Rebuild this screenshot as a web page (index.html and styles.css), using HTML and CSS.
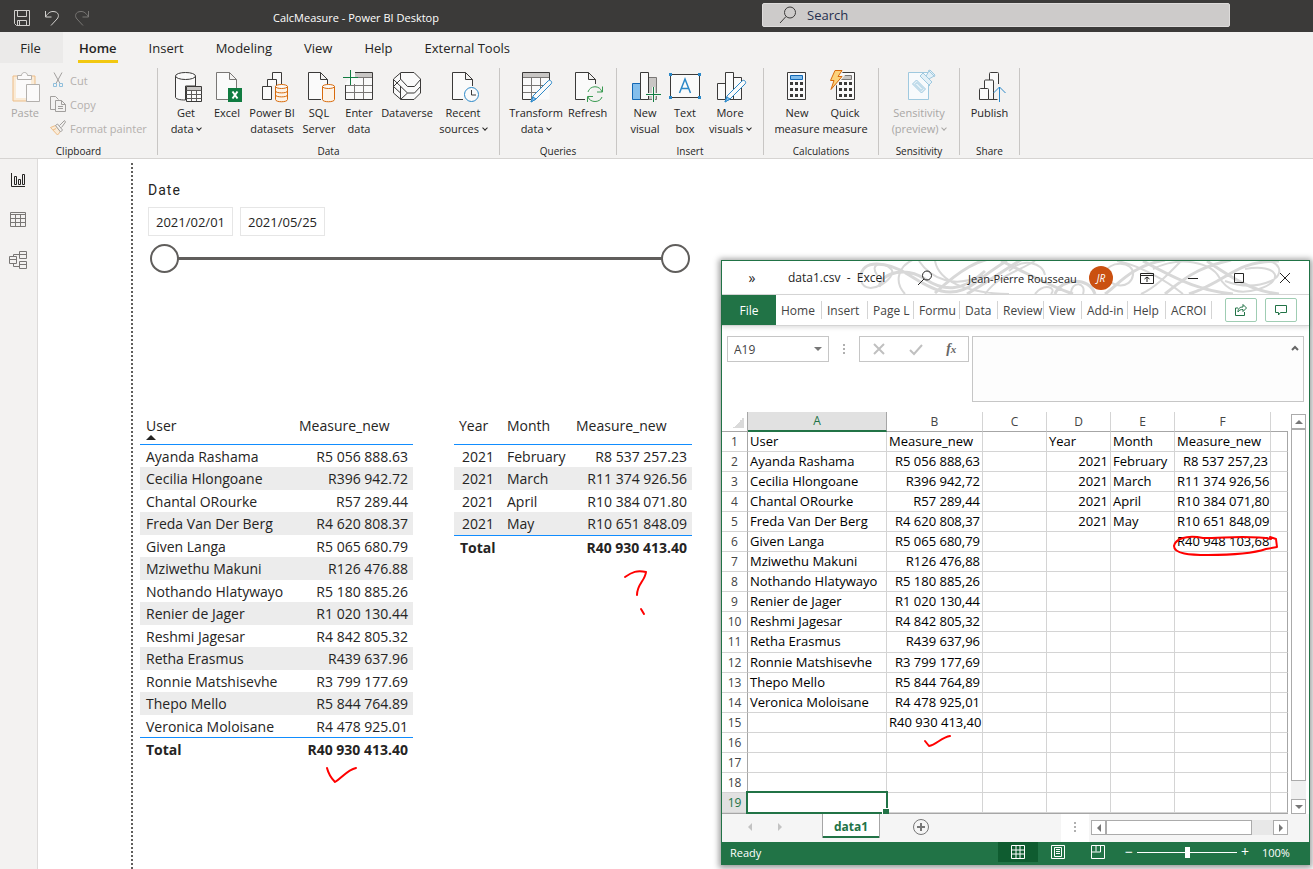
FILE: index.html
```
<!DOCTYPE html>
<html lang="en">
<head>
    <meta charset="UTF-8">
    <meta name="viewport" content="width=device-width, initial-scale=1.0">
    <title>CalcMeasure - Power BI Desktop</title>
    <link rel="stylesheet" href="styles.css">
</head>
<body>
    <!-- title bar -->
    <header class="titlebar">
        <div class="quick-access">
            <button aria-label="Save"><svg width="16" height="16" viewBox="0 0 16 16"><path d="M.5.5h15v15H2.500L.5 13.500zM3.500.5v6h9v-6M3.500 15.500v-5h9v5M5.500 11v4.500" /></svg></button>
            <button aria-label="Undo"><svg width="16" height="16" viewBox="0 0 16 16"><path d="M1.500 1v6h6M1.500 7C4 3 6 1.500 9 1.500c6 0 6.500 5 4 7.500L7 15.500" /></svg></button>
            <button aria-label="Redo" disabled><svg width="16" height="16" viewBox="0 0 16 16"><path d="M14.500 1v6h-6M14.500 7C12 3 10 1.500 7 1.500c-6 0-6.500 5-4 7.500l6 6.500" /></svg></button>
        </div>
        <div class="app-title">CalcMeasure - Power BI Desktop</div>
        <label class="search">
            <svg width="18" height="18" viewBox="0 0 18 18"><circle cx="11" cy="6.500" r="5.500" /><path d="M7 10.500L1 17" /></svg>
            <input type="text" placeholder="Search" aria-label="Search">
        </label>
    </header>

    <!-- ribbon tabs -->
    <nav class="tabs">
        <button class="tab tab-file">File</button>
        <button class="tab active">Home</button>
        <button class="tab">Insert</button>
        <button class="tab">Modeling</button>
        <button class="tab">View</button>
        <button class="tab">Help</button>
        <button class="tab">External Tools</button>
    </nav>

    <!-- ribbon -->
    <div class="ribbon">
        <section class="group group-clipboard">
            <div class="cmds">
                <button class="cmd" disabled>
                    <svg class="icon" viewBox="0 0 32 32"><path d="M4 6h22v25H4z" fill="#faebd7" stroke="#edbd87" /><path d="M7 9h15v19H7z" fill="#fbfafa" stroke="none" /><path d="M8.500 9.500V5.500h4c0-4 6-4 6 0h4v4z" fill="#fbfafa" stroke="#b3b0ad" /><path d="M17.500 14.500h13v17h-13z" fill="#fbfafa" stroke="#b3b0ad" /></svg>
                    Paste
                </button>
                <div class="small-cmds">
                    <button disabled><svg width="16" height="16" viewBox="0 0 16 16"><path d="M4 .5l6 11M12 .5l-6 11" stroke="#a19f9d" /><path d="M3.500 11.500h3v3h-3zM9.500 11.500h3v3h-3z" stroke="#8fbfdc" /></svg>Cut</button>
                    <button disabled><svg width="16" height="16" viewBox="0 0 16 16"><path d="M5.500 13.500h-5V.5h5l3 3M5.500 4.500h6l4 4v7h-10zM11.500 4.500v4h4M8 10.500h5M8 12.500h5" stroke="#a19f9d" /></svg>Copy</button>
                    <button disabled><svg width="16" height="16" viewBox="0 0 16 16"><path d="M.5 7.500l5-2 5 6-3 3.500zM3 10l3-1.500" fill="#faebd7" stroke="#edbd87" /><path d="M5.500 5.500l2-1.500 5 6-2 2zM9.500 5.500l5-5 1 1.500-4 5.500" fill="#f3f2f1" stroke="#a19f9d" /></svg>Format painter</button>
                </div>
            </div>
            <h2>Clipboard</h2>
        </section>

        <section class="group group-data">
            <div class="cmds">
                <button class="cmd">
                    <svg class="icon" viewBox="0 0 32 32"><path d="M5.500 6v21c0 2 4 3 10 3V16h10V6" fill="#fafafa" /><ellipse cx="15.500" cy="6" rx="10" ry="3.500" fill="#fafafa" /><path d="M16.500 16.500h15v15h-15z" fill="#fafafa" /><path d="M17 17h14v3H17z" fill="#c8c6c4" stroke="none" /><path d="M16.500 20.500h15M16.500 24.500h15M16.500 28.500h15M21.500 20v11M26.500 20v11" stroke="#605e5c" /></svg>
                    Get<br>data <i class="caret"></i>
                </button>
                <button class="cmd">
                    <svg class="icon" viewBox="0 0 32 32"><path d="M17 29.500H5.500v-27h13l7 7V18M18.500 2.500v7h7" fill="#fafafa" stroke="#797775" /><path d="M17 18h14v14H17z" fill="#107c41" stroke="none" /><path d="M21.500 21.500l5 7M26.500 21.500l-5 7" stroke="#fff" stroke-width="2" /></svg>
                    Excel
                </button>
                <button class="cmd">
                    <svg class="icon" viewBox="0 0 32 32"><path d="M6.500 16.500h9v13h-9zM11.500 16V9.500h9V15M16.500 9V2.500h9V14" fill="#fafafa" /><path d="M19.500 16.500v13c0 3 12 3 12 0v-13z" fill="#fdf3e7" stroke="#d86a0b" /><ellipse cx="25.500" cy="16.500" rx="6" ry="2" fill="#fafafa" stroke="#d86a0b" /><path d="M19.500 21c0 2.500 12 2.500 12 0M19.500 25c0 2.500 12 2.500 12 0" stroke="#d86a0b" /></svg>
                    Power BI<br>datasets
                </button>
                <button class="cmd">
                    <svg class="icon" viewBox="0 0 32 32"><path d="M18 29.500H5.500v-27h12l7 7V14M17.500 2.500v7h7" fill="#fafafa" /><path d="M19.500 16.500v13c0 3 12 3 12 0v-13z" fill="#fdf3e7" stroke="#d86a0b" /><ellipse cx="25.500" cy="16.500" rx="6" ry="2" fill="#fafafa" stroke="#d86a0b" /></svg>
                    SQL<br>Server
                </button>
                <button class="cmd">
                    <svg class="icon" viewBox="0 0 32 32"><path d="M2.500 13v16.500h27v-27H11" fill="#fafafa" stroke="none" /><path d="M12 3h17v4H12z" fill="#c8c6c4" stroke="none" /><path d="M13 7.500h16.500M3 15.500h26.500M3 22.500h26.500M11.500 14v15M20.500 7v22" stroke="#797775" /><path d="M2.500 15v14.500h27v-27H12" /><path d="M7.500 0v15M0 7.500h15" stroke="#107c41" /></svg>
                    Enter<br>data
                </button>
                <button class="cmd">
                    <svg class="icon" viewBox="0 0 32 32"><path d="M10 2.500h13l6.500 6.500v14L23 29.500H10L2.500 23V9z" fill="#fafafa" /><path d="M9.500 3v6l7 7.500h7l6-7M2.500 9.500l14 13.500h7l6-6.500M2.500 16.500l7 6.500v6M9.500 29.500l7-6.500M9.500 16v7M2.500 16.500l7-7" /></svg>
                    Dataverse
                </button>
                <button class="cmd">
                    <svg class="icon" viewBox="0 0 32 32"><path d="M16 29.500H5.500v-27h13l7 7V16M18.500 2.500v7h7" fill="#fafafa" /><circle cx="24.500" cy="24.500" r="7" fill="#fafafa" stroke="#2b88c8" /><path d="M24.500 20v5H29" /></svg>
                    Recent<br>sources <i class="caret"></i>
                </button>
            </div>
            <h2>Data</h2>
        </section>

        <section class="group group-queries">
            <div class="cmds">
                <button class="cmd">
                    <svg class="icon" viewBox="0 0 32 32"><path d="M2.500 2.500h27v27h-27z" fill="#fafafa" stroke="none" /><path d="M3 3h26v4H3z" fill="#c8c6c4" stroke="none" /><path d="M3 7.500h26M3 15.500h24M3 22.500h17M11.500 7v22M20.500 7v15" stroke="#797775" /><path d="M11 29.500H2.500v-27h27V10" /><path d="M11 32l2-6L28 11c2-2 5 1 3 3L16 29z" fill="#fafafa" stroke="#2b88c8" /><path d="M11 32l2-5 3 2z" fill="#83beec" stroke="#2b88c8" /></svg>
                    Transform<br>data <i class="caret"></i>
                </button>
                <button class="cmd">
                    <svg class="icon" viewBox="0 0 32 32"><path d="M14 29.500H4.500v-27h13l7 7V14M17.500 2.500v7h7" fill="#fafafa" /><path d="M17 22c2-7 12-7 14 0M31.500 16.500V22H26M31 27c-2 6-12 6-14 0M16.500 32v-5.500H22" stroke="#3a9b52" /></svg>
                    Refresh
                </button>
            </div>
            <h2>Queries</h2>
        </section>

        <section class="group group-insert">
            <div class="cmds">
                <button class="cmd">
                    <svg class="icon" viewBox="0 0 32 32"><path d="M3.500 13.500h8v16h-8z" fill="#83beec" stroke="#1267b4" /><path d="M19.500 7.500h8v22h-8z" fill="#c8c6c4" stroke="#797775" /><path d="M11.500 2.500h8v27h-8z" fill="#fafafa" /><path d="M24.500 17v15M17 24.500h15" stroke="#f3f2f1" stroke-width="3" /><path d="M24.500 17v15M17 24.500h15" stroke="#107c41" /></svg>
                    New<br>visual
                </button>
                <button class="cmd">
                    <svg class="icon" viewBox="0 0 32 32"><path d="M1.500 4.500h29v23h-29z" fill="#fafafa" /><path d="M10.500 23L16 9l5.500 14M12.500 18.500h7" stroke="#2b88c8" stroke-width="1.500" /><path d="M0 3h3v3H0zM29 3h3v3h-3zM0 26h3v3H0zM29 26h3v3h-3z" fill="#2b88c8" stroke="none" /></svg>
                    Text<br>box
                </button>
                <button class="cmd">
                    <svg class="icon" viewBox="0 0 32 32"><path d="M3.500 13.500h8v16h-8zM19.500 7.500h8v22h-8zM11.500 2.500h8v27h-8z" fill="#fafafa" /><path d="M11 32l2-6L28 11c2-2 5 1 3 3L16 29z" fill="#fafafa" stroke="#2b88c8" /><path d="M11 32l2-5 3 2z" fill="#83beec" stroke="#2b88c8" /></svg>
                    More<br>visuals <i class="caret"></i>
                </button>
            </div>
            <h2>Insert</h2>
        </section>

        <section class="group group-calc">
            <div class="cmds">
                <button class="cmd">
                    <svg class="icon" viewBox="0 0 32 32"><path d="M6.500 2.500h18v27h-18z" fill="#fafafa" /><path d="M9.500 5.500h12v4h-12z" fill="#83beec" stroke="#1267b4" /><path d="M9 13.500h13M9 19.500h13M9 25.500h13" stroke-width="3" stroke-dasharray="3 2" /></svg>
                    New<br>measure
                </button>
                <button class="cmd">
                    <svg class="icon" viewBox="0 0 32 32"><path d="M7.500 2.500h18v27h-18z" fill="#fafafa" /><path d="M11.500 5.500h11v4h-11z" fill="#c8c6c4" stroke="#797775" /><path d="M10 13.500h13M10 19.500h13M10 25.500h13" stroke-width="3" stroke-dasharray="3 2" /><path d="M6 .5h7l-4 6h4L2 19.500l3-9H1.500z" fill="#fcd27c" stroke="#f3f2f1" stroke-width="3" /><path d="M6 .5h7l-4 6h4L2 19.500l3-9H1.500z" fill="#fcd27c" stroke="#d86a0b" /></svg>
                    Quick<br>measure
                </button>
            </div>
            <h2>Calculations</h2>
        </section>

        <section class="group group-sens">
            <div class="cmds">
                <button class="cmd" disabled>
                    <svg class="icon" viewBox="0 0 32 32"><path d="M5.500 2.500h20v27h-20z" fill="#f7fafc" stroke="#9fc9df" /><g fill="#e3f0f7" stroke="#9fc9df"><path d="M9.500 14l4-4 9 9-4 4zM12 14.500l2-2 6 6-2 2z" /><path d="M17 6l3-3 9 9-3 3zM19 8l8 8M23 6l3-5 5 5-5 3zM25 1l2-1 5 5-1 2" /></g></svg>
                    Sensitivity<br>(preview) <i class="caret"></i>
                </button>
            </div>
            <h2>Sensitivity</h2>
        </section>

        <section class="group group-share">
            <div class="cmds">
                <button class="cmd">
                    <svg class="icon" viewBox="0 0 32 32"><path d="M15.500 10V3.500q0-1 1-1h7q1 0 1 1V14M10.500 18v-7q0-1 1-1h7q1 0 1 1v18.500M5.500 29.500v-10q0-1 1-1h7q1 0 1 1v10zM14.500 29.500h9" fill="#fafafa" /><path d="M25.500 32V17M19.500 23l6-6 6 6" stroke="#2b88c8" /></svg>
                    Publish
                </button>
            </div>
            <h2>Share</h2>
        </section>
    </div>

    <main class="workspace">
        <!-- view switcher -->
        <aside class="views">
            <button class="active" aria-label="Report"><svg width="18" height="18" viewBox="0 0 18 18"><path d="M2.500 2v13.500H16M5.500 5.500h2v8h-2zM9.500 8.500h2v5h-2zM13.500 3.500h2v10h-2z" /></svg></button>
            <button aria-label="Data"><svg width="18" height="18" viewBox="0 0 18 18"><path d="M1.500 1.500h15v14h-15zM1.500 3.500h15M1.500 7.500h15M1.500 11.500h15M6.500 3.500v12M11.500 3.500v12" /></svg></button>
            <button aria-label="Model"><svg width="18" height="18" viewBox="0 0 18 18"><path d="M.5 5.500h7v7h-7zM.5 8.500h7M10.500.5h7v7h-7zM10.500 3.500h7M10.500 10.500h7v7h-7zM10.500 13.500h7M4.500 5.500v-2h6M4.500 12.500v3h6" /></svg></button>
        </aside>

        <div class="report">
            <div class="slicer">
                <h3>Date</h3>
                <div class="dates">
                    <input type="text" value="2021/02/01" aria-label="Start date">
                    <input type="text" value="2021/05/25" aria-label="End date">
                </div>
                <div class="range">
                    <input type="range" min="0" max="100" value="0" aria-label="Range start">
                    <input type="range" min="0" max="100" value="100" aria-label="Range end">
                </div>
            </div>

            <div class="visuals">
                <table class="visual by-user">
                    <thead>
                        <tr><th>User<i class="sort"></i></th><th>Measure_new</th></tr>
                    </thead>
                    <tbody>
                        <tr><td>Ayanda Rashama</td><td>R5 056 888.63</td></tr>
                        <tr><td>Cecilia Hlongoane</td><td>R396 942.72</td></tr>
                        <tr><td>Chantal ORourke</td><td>R57 289.44</td></tr>
                        <tr><td>Freda Van Der Berg</td><td>R4 620 808.37</td></tr>
                        <tr><td>Given Langa</td><td>R5 065 680.79</td></tr>
                        <tr><td>Mziwethu Makuni</td><td>R126 476.88</td></tr>
                        <tr><td>Nothando Hlatywayo</td><td>R5 180 885.26</td></tr>
                        <tr><td>Renier de Jager</td><td>R1 020 130.44</td></tr>
                        <tr><td>Reshmi Jagesar</td><td>R4 842 805.32</td></tr>
                        <tr><td>Retha Erasmus</td><td>R439 637.96</td></tr>
                        <tr><td>Ronnie Matshisevhe</td><td>R3 799 177.69</td></tr>
                        <tr><td>Thepo Mello</td><td>R5 844 764.89</td></tr>
                        <tr><td>Veronica Moloisane</td><td>R4 478 925.01</td></tr>
                    </tbody>
                    <tfoot>
                        <tr><td>Total</td><td>R40 930 413.40</td></tr>
                    </tfoot>
                </table>

                <table class="visual by-month">
                    <thead>
                        <tr><th>Year</th><th>Month</th><th>Measure_new</th></tr>
                    </thead>
                    <tbody>
                        <tr><td>2021</td><td>February</td><td>R8 537 257.23</td></tr>
                        <tr><td>2021</td><td>March</td><td>R11 374 926.56</td></tr>
                        <tr><td>2021</td><td>April</td><td>R10 384 071.80</td></tr>
                        <tr><td>2021</td><td>May</td><td>R10 651 848.09</td></tr>
                    </tbody>
                    <tfoot>
                        <tr><td>Total</td><td></td><td>R40 930 413.40</td></tr>
                    </tfoot>
                </table>
            </div>

            <svg class="ink ink-total" width="36" height="22" viewBox="0 0 36 22"><path d="M3 4c1 4 2 8 8 14 7-4 12-12 21-14" /></svg>
            <svg class="ink ink-question" width="30" height="50" viewBox="0 0 30 50"><path d="M4 10c7-5 12-7 21-5-1 9-9 12-9 23M20 42l3 5" /></svg>
        </div>
    </main>

    <!-- floating Excel window -->
    <div class="excel">
        <div class="xl-title">
            <svg class="swirls" width="450" height="33" viewBox="0 0 450 33">
                <g stroke-width="3">
                    <path d="M2 16C2-2 28 0 50 14s42 26 66 8c16-12 24-18 32-22M108 33c24-14 40-26 54-34M76 32C100 10 120-4 146-4M20 26C24 10 48 6 66 18s36 14 60-8" />
                    <path d="M142 0c30 14 46 24 72 33M196 33c6-16 34-18 40 0M246 33c14-10 26-28 60-34M330 33C370 20 374 0 420 0M284 0c40 22 60 30 90 33M306 33c26-22 40-28 66-34M348 0c24 16 44 30 72 33" />
                </g>
                <g stroke-width="2">
                    <path d="M2 20c6 18 38-4 30-12S10 2 18 14M46 33C34 20 40 4 56-2M60 0c12 18 36 28 64 14M76 0c4 20 30 32 74 33M126 33C140 14 160 10 176 0M150 10c14-14 34-8 36 4" />
                    <path d="M176 33c10-12 22-6 16 0M212 33c0-14 16-12 12 0M246 14c2-16 30-14 28 0s-22 14-28 0M258 0c22 4 50 20 66 33M294 8c28-14 58-6 66 8s20 18 40 12c26-8 20-26-14-20M322 0c-10 10-24 26-40 33M402 0c20-2 24 14 10 20s-30 6-46 0" />
                </g>
            </svg>
            <button class="xl-more" aria-label="More">»</button>
            <div class="xl-name">data1.csv&nbsp; -&nbsp; Excel</div>
            <button class="xl-search" aria-label="Search"><svg width="16" height="16" viewBox="0 0 16 16"><circle cx="10" cy="5.500" r="4.500" /><path d="M7 9L1 15" /></svg></button>
            <div class="xl-user">Jean-Pierre Rousseau</div>
            <div class="avatar">JR</div>
            <div class="xl-window-btns">
                <button aria-label="Ribbon display options"><svg width="14" height="14" viewBox="0 0 14 14"><path d="M.5 2.500h13v10H.5zM.5 4.500h13M7 11V6M4.500 8L7 6l2.500 2" /></svg></button>
                <button aria-label="Minimise"><svg width="14" height="14" viewBox="0 0 14 14"><path d="M2 7.500h10" /></svg></button>
                <button aria-label="Maximise"><svg width="14" height="14" viewBox="0 0 14 14"><path d="M2.500 2.500h9v9h-9z" /></svg></button>
                <button aria-label="Close"><svg width="14" height="14" viewBox="0 0 14 14"><path d="M2 2l10 10M12 2L2 12" /></svg></button>
            </div>
        </div>

        <nav class="xl-tabs">
            <button class="xl-file">File</button>
            <button>Home</button>
            <button>Insert</button>
            <button>Page L</button>
            <button>Formu</button>
            <button class="short">Data</button>
            <button>Review</button>
            <button class="short">View</button>
            <button>Add-in</button>
            <button class="short">Help</button>
            <button>ACROI</button>
            <div class="xl-actions">
                <button aria-label="Share"><svg width="14" height="14" viewBox="0 0 14 14"><path d="M4 5H1.500v7.500h9V9M4 9c0-4 2-5 5-5V1.500L12.500 5 9 8.500V6.500C6.500 6.500 5 7 4 9z" /></svg></button>
                <button aria-label="Comments"><svg width="14" height="14" viewBox="0 0 14 14"><path d="M1.500 2.500h11v7h-6L4.500 12V9.500h-3z" /></svg></button>
            </div>
        </nav>

        <div class="formula-bar">
            <label class="name-box"><input type="text" value="A19" aria-label="Name box"><i class="tri-down"></i></label>
            <i class="grip"></i>
            <div class="fx">
                <button disabled aria-label="Cancel"><svg width="14" height="14" viewBox="0 0 14 14"><path d="M2 2l10 10M12 2L2 12" /></svg></button>
                <button disabled aria-label="Enter"><svg width="14" height="14" viewBox="0 0 14 14"><path d="M1 8l4 4 8-9" /></svg></button>
                <button class="fx-btn">f<sub>x</sub></button>
            </div>
            <div class="formula">
                <textarea aria-label="Formula"></textarea>
                <svg width="8" height="6" viewBox="0 0 8 6"><path d="M1 5l3-3 3 3" /></svg>
            </div>
        </div>

        <div class="sheet">
            <table class="grid">
                <colgroup><col class="c-num"><col class="c-a"><col class="c-b"><col class="c-c"><col class="c-c"><col class="c-c"><col class="c-b"><col class="c-rest"></colgroup>
                <thead>
                    <tr><th class="corner"></th><th class="selected">A</th><th>B</th><th>C</th><th>D</th><th>E</th><th>F</th><th></th></tr>
                </thead>
                <tbody>
                    <tr><th>1</th><td>User</td><td>Measure_new</td><td></td><td>Year</td><td>Month</td><td>Measure_new</td><td></td></tr>
                    <tr><th>2</th><td>Ayanda Rashama</td><td class="num">R5 056 888,63</td><td></td><td class="num">2021</td><td>February</td><td class="num">R8 537 257,23</td><td></td></tr>
                    <tr><th>3</th><td>Cecilia Hlongoane</td><td class="num">R396 942,72</td><td></td><td class="num">2021</td><td>March</td><td class="num">R11 374 926,56</td><td></td></tr>
                    <tr><th>4</th><td>Chantal ORourke</td><td class="num">R57 289,44</td><td></td><td class="num">2021</td><td>April</td><td class="num">R10 384 071,80</td><td></td></tr>
                    <tr><th>5</th><td>Freda Van Der Berg</td><td class="num">R4 620 808,37</td><td></td><td class="num">2021</td><td>May</td><td class="num">R10 651 848,09</td><td></td></tr>
                    <tr><th>6</th><td>Given Langa</td><td class="num">R5 065 680,79</td><td></td><td></td><td></td><td class="num">R40 948 103,68</td><td></td></tr>
                    <tr><th>7</th><td>Mziwethu Makuni</td><td class="num">R126 476,88</td><td></td><td></td><td></td><td></td><td></td></tr>
                    <tr><th>8</th><td>Nothando Hlatywayo</td><td class="num">R5 180 885,26</td><td></td><td></td><td></td><td></td><td></td></tr>
                    <tr><th>9</th><td>Renier de Jager</td><td class="num">R1 020 130,44</td><td></td><td></td><td></td><td></td><td></td></tr>
                    <tr><th>10</th><td>Reshmi Jagesar</td><td class="num">R4 842 805,32</td><td></td><td></td><td></td><td></td><td></td></tr>
                    <tr><th>11</th><td>Retha Erasmus</td><td class="num">R439 637,96</td><td></td><td></td><td></td><td></td><td></td></tr>
                    <tr><th>12</th><td>Ronnie Matshisevhe</td><td class="num">R3 799 177,69</td><td></td><td></td><td></td><td></td><td></td></tr>
                    <tr><th>13</th><td>Thepo Mello</td><td class="num">R5 844 764,89</td><td></td><td></td><td></td><td></td><td></td></tr>
                    <tr><th>14</th><td>Veronica Moloisane</td><td class="num">R4 478 925,01</td><td></td><td></td><td></td><td></td><td></td></tr>
                    <tr><th>15</th><td></td><td class="num">R40 930 413,40</td><td></td><td></td><td></td><td></td><td></td></tr>
                    <tr><th>16</th><td></td><td></td><td></td><td></td><td></td><td></td><td></td></tr>
                    <tr><th>17</th><td></td><td></td><td></td><td></td><td></td><td></td><td></td></tr>
                    <tr><th>18</th><td></td><td></td><td></td><td></td><td></td><td></td><td></td></tr>
                    <tr><th class="selected">19</th><td class="active-cell"></td><td></td><td></td><td></td><td></td><td></td><td></td></tr>
                </tbody>
            </table>
            <div class="vscroll">
                <button aria-label="Scroll up"><i class="tri-up"></i></button>
                <div class="vthumb"></div>
                <button aria-label="Scroll down"><i class="tri-down"></i></button>
            </div>
            <svg class="ink ink-circle" width="108" height="24" viewBox="0 0 108 24"><path d="M100 5C80 1 55 4 32 4 14 0 4 6 3 12c0 8 16 9 34 9 26 0 46-2 58-6l11-2-1-8-6-2" /></svg>
            <svg class="ink ink-check" width="30" height="16" viewBox="0 0 30 16"><path d="M3 8l4 5C14 12 20 4 28 3" /></svg>
        </div>

        <div class="sheet-bar">
            <div class="sheet-nav"><i class="tri-left"></i><i class="tri-right"></i></div>
            <button class="sheet-tab">data1</button>
            <button class="add-sheet" aria-label="New sheet"><svg width="16" height="16" viewBox="0 0 16 16"><circle cx="8" cy="8" r="7.500" /><path d="M8 4v8M4 8h8" stroke-width="2" /></svg></button>
            <div class="splitter"><i class="grip"></i></div>
            <div class="hscroll">
                <button aria-label="Scroll left"><i class="tri-left"></i></button>
                <div class="hthumb"></div>
                <button aria-label="Scroll right"><i class="tri-right"></i></button>
            </div>
        </div>

        <footer class="status">
            <span class="ready">Ready</span>
            <button class="on" aria-label="Normal view"><svg width="14" height="14" viewBox="0 0 14 14"><path d="M.5.5h13v13H.5zM.5 5h13M.5 9h13M5 .5v13M9 .5v13" /></svg></button>
            <button aria-label="Page layout"><svg width="14" height="14" viewBox="0 0 14 14"><path d="M.5.5h13v13H.5zM3.500 2.500h7v9h-7zM5 4.500h4M5 6.500h4M5 8.500h4" /></svg></button>
            <button aria-label="Page break preview"><svg width="14" height="14" viewBox="0 0 14 14"><path d="M.5.5h13v13H.5zM5 .5v6M.5 7h9V.5" /></svg></button>
            <div class="zoom">
                <button aria-label="Zoom out">−</button>
                <input type="range" min="0" max="100" value="51" aria-label="Zoom">
                <button aria-label="Zoom in">+</button>
            </div>
            <span class="percent">100%</span>
        </footer>
    </div>
</body>
</html>
```

FILE: styles.css
```
* {
    box-sizing: border-box;
    margin: 0;
    padding: 0;
}

body {
    font-family: "Open Sans", "Noto Sans", sans-serif;
    font-size: 12px;
    color: #252423;
    background: #fff;
    min-height: 100vh;
    display: flex;
    flex-direction: column;
    position: relative;
    overflow: hidden;
}

button,
input,
textarea {
    font: inherit;
    color: inherit;
    background: none;
    border: none;
    outline: none;
}

svg {
    fill: none;
    stroke: currentColor;
    flex-shrink: 0;
}

/* title bar */
.titlebar {
    display: flex;
    align-items: center;
    height: 32px;
    background: #3b3a39;
    color: #fff;
}

.quick-access {
    display: flex;
    gap: 14px;
    padding: 3px 0 0 14px;
    width: 273px;
    color: #d2d0ce;
}

.quick-access button {
    height: 16px;
}

.quick-access button:disabled {
    color: #797775;
}

.app-title {
    width: 489px;
    font-size: 11px;
    padding-top: 2px;
}

.search {
    display: flex;
    align-items: center;
    gap: 10px;
    width: 468px;
    height: 24px;
    margin-bottom: 2px;
    padding-left: 16px;
    background: #cdcbca;
    border: 1px solid #dddbda;
    border-radius: 2px;
    color: #3b3a39;
}

.search input {
    flex: 1;
    font-size: 13px;
}

.search input::placeholder {
    color: #252f4f;
}

/* tabs */
.tabs {
    display: flex;
    height: 32px;
    background: #f3f2f1;
}

.tab {
    margin: 0 10px;
    padding: 0 6px;
    font-size: 13px;
    position: relative;
}

.tab-file {
    width: 63px;
    height: 31px;
    margin: 0;
    background: #ebeae9;
    padding: 1px 2px 0 0;
}

.tab.active {
    font-weight: 600;
}

.tab.active::after {
    content: "";
    position: absolute;
    left: 5px;
    right: 5px;
    bottom: 1px;
    height: 3px;
    background: #f2c811;
}

/* ribbon */
.ribbon {
    display: flex;
    height: 95px;
    padding: 4px 0 3px;
    background: #f3f2f1;
    border-bottom: 1px solid #d6d4d2;
}

.group {
    display: flex;
    flex-direction: column;
    justify-content: space-between;
    border-right: 1px solid #c8c6c4;
}

.group h2 {
    font-size: 10px;
    font-weight: 400;
    line-height: 8px;
    text-align: center;
}

.cmds {
    display: grid;
}

.cmd {
    align-self: start;
    padding-top: 2px;
    font-size: 11px;
    line-height: 16px;
    text-align: center;
    white-space: nowrap;
}

.cmd .icon {
    display: block;
    width: 32px;
    height: 32px;
    margin: 0 auto 3px;
    overflow: visible;
    color: #3b3a39;
}

.cmd:disabled {
    color: #a9a7a5;
}

.caret {
    display: inline-block;
    width: 4px;
    height: 4px;
    margin: 0 0 3px 1px;
    border: solid currentColor;
    border-width: 0 1px 1px 0;
    transform: rotate(45deg);
}

.group-clipboard .cmds {
    grid-template-columns: 50px 107px;
}

.small-cmds {
    display: flex;
    flex-direction: column;
    gap: 8px;
    padding-top: 4px;
}

.small-cmds button {
    display: flex;
    align-items: center;
    gap: 4px;
    height: 16px;
    font-size: 11px;
    color: #b3b0ad;
    white-space: nowrap;
}

.group-data .cmds {
    grid-template-columns: 44px 38px 52px 42px 38px 58px 54px;
    padding: 0 9px 0 6px;
}

.group-queries .cmds {
    grid-template-columns: 64px 38px;
    padding: 0 10px 0 4px;
}

.group-insert .cmds {
    grid-template-columns: 40px 40px 50px;
    padding: 0 8px;
}

.group-calc .cmds {
    grid-template-columns: 48px 48px;
    padding: 0 9px;
}

.group-sens .cmds {
    grid-template-columns: 80px;
}

.group-share .cmds {
    grid-template-columns: 59px;
}

/* workspace */
.workspace {
    flex: 1;
    display: flex;
}

.views {
    display: flex;
    flex-direction: column;
    align-items: center;
    gap: 22px;
    width: 38px;
    min-height: 710px;
    padding-top: 12px;
    background: #f3f2f1;
    border-right: 1px solid #dddbda;
    color: #797775;
}

.views button {
    height: 18px;
    margin-right: 2px;
}

.views .active {
    color: #252423;
}

.report {
    flex: 1;
    margin: 4px 0 0 93px;
    padding: 18px 0 0 7px;
    border-left: 2px dotted #605e5c;
    position: relative;
}

.slicer {
    width: 558px;
    padding-left: 8px;
}

.slicer h3 {
    font-family: Roboto, sans-serif;
    font-size: 14px;
    line-height: 18px;
    font-weight: 400;
    letter-spacing: 1px;
}

.dates {
    display: flex;
    gap: 7px;
    margin-top: 8px;
}

.dates input {
    width: 85px;
    height: 29px;
    border: 1px solid #e6e6e6;
    text-align: center;
    font-size: 13px;
}

.range {
    position: relative;
    width: 540px;
    height: 29px;
    margin: 8px 0 0 2px;
    background: linear-gradient(#605e5c, #605e5c) center / 500px 3px no-repeat;
}

.range input {
    position: absolute;
    inset: 0;
    width: 100%;
    appearance: none;
    pointer-events: none;
}

.range input::-webkit-slider-thumb {
    appearance: none;
    width: 29px;
    height: 29px;
    border: 2px solid #605e5c;
    border-radius: 50%;
    background: #fff;
    pointer-events: auto;
}

.visuals {
    display: flex;
    align-items: flex-start;
    gap: 41px;
    margin-top: 139px;
}

.visual {
    border-collapse: separate;
    border-spacing: 0;
    font-size: 14px;
    line-height: 18px;
    table-layout: fixed;
}

.visual th {
    height: 33px;
    padding: 5px 0 0 5px;
    font-weight: 400;
    text-align: left;
    vertical-align: top;
    border-bottom: 1px solid #118dff;
    position: relative;
}

.visual td {
    height: 22px;
    padding: 1px 5px 0;
    white-space: nowrap;
}

.visual tbody tr:nth-child(even) {
    background: #ececec;
}

.visual tbody tr:nth-child(even) td {
    height: 23px;
}

.visual td:last-child {
    text-align: right;
}

.visual tfoot td {
    height: 24px;
    font-weight: 700;
    border-top: 1px solid #118dff;
}

.visual tfoot td:last-child {
    padding-left: 0;
}

.by-user {
    width: 273px;
}

.by-user th,
.by-user td {
    padding-left: 6px;
}

.by-user th:first-child {
    width: 153px;
}

.by-month {
    width: 238px;
}

.by-month th:first-child {
    width: 48px;
}

.by-month th:nth-child(2) {
    width: 69px;
}

.by-month td:first-child {
    padding-left: 8px;
    padding-right: 0;
}

.by-month tfoot td:first-child {
    padding-left: 6px;
}

.sort {
    position: absolute;
    left: 6px;
    bottom: 4px;
    border: solid transparent;
    border-width: 0 5px 5px;
    border-bottom-color: #252423;
}

/* red pen marks */
.ink {
    position: absolute;
    color: #f00;
    stroke-width: 2;
    stroke-linecap: round;
    stroke-linejoin: round;
    pointer-events: none;
}

.ink-total {
    left: 191px;
    top: 601px;
}

.ink-question {
    left: 488px;
    top: 404px;
}

/* excel window */
.excel {
    position: absolute;
    left: 721px;
    top: 260px;
    width: 589px;
    background: #fff;
    border: 1px solid #217346;
    box-shadow: 0 1px 6px 2px rgba(0, 0, 0, 0.4);
    color: #444;
}

.xl-title {
    display: flex;
    align-items: center;
    height: 34px;
    border-bottom: 1px solid #d4d4d4;
    color: #252423;
    position: relative;
}

.swirls {
    position: absolute;
    right: 0;
    top: 0;
    color: #d8d8d8;
}

.xl-title > :not(.swirls) {
    position: relative;
}

.xl-more {
    width: 60px;
    font-size: 14px;
}

.xl-name {
    width: 135px;
    padding-left: 6px;
    white-space: nowrap;
}

.xl-search {
    width: 50px;
    height: 16px;
    text-align: left;
}

.xl-user {
    width: 122px;
    padding: 2px 0 0 1px;
    font-size: 11px;
    white-space: nowrap;
}

.avatar {
    width: 24px;
    height: 24px;
    border-radius: 50%;
    background: #ca5010;
    color: #fff;
    font-size: 10px;
    font-style: italic;
    line-height: 24px;
    text-align: center;
}

.xl-window-btns {
    display: flex;
    gap: 32px;
    margin-left: 27px;
}

.xl-window-btns button {
    height: 14px;
}

.xl-tabs {
    display: flex;
    align-items: center;
    height: 31px;
    border-bottom: 1px solid #d4d4d4;
    box-shadow: 0 2px 4px rgba(0, 0, 0, 0.12);
}

.xl-tabs > button {
    width: 46px;
    height: 18px;
    padding-left: 5px;
    border-right: 1px solid #d4d4d4;
    line-height: 19px;
    text-align: left;
    white-space: nowrap;
}

.xl-tabs > .short {
    width: 38px;
}

.xl-tabs > .xl-file {
    width: 54px;
    height: 30px;
    padding: 0;
    border: none;
    background: #217346;
    color: #fff;
    text-align: center;
}

.xl-actions {
    display: flex;
    gap: 8px;
    margin-left: 13px;
}

.xl-actions button {
    width: 32px;
    height: 24px;
    padding-top: 3px;
    border: 1px solid #9fcdb3;
    border-radius: 2px;
    color: #217346;
}

.formula-bar {
    display: flex;
    height: 86px;
    padding: 10px 5px 10px 5px;
}

.name-box {
    display: flex;
    align-items: center;
    width: 102px;
    height: 26px;
    padding: 0 6px;
    border: 1px solid #c6c6c6;
}

.name-box input {
    width: 80px;
}

.tri-down,
.tri-up,
.tri-left,
.tri-right {
    display: block;
    flex-shrink: 0;
    border: 4px solid transparent;
}

.tri-down {
    border-top-color: #777;
    border-bottom: none;
}

.tri-up {
    border-bottom-color: #777;
    border-top: none;
}

.tri-left {
    border-right-color: #777;
    border-left: none;
}

.tri-right {
    border-left-color: #777;
    border-right: none;
}

.grip {
    width: 2px;
    height: 10px;
    margin: 8px 14px;
    background: repeating-linear-gradient(#b0b0b0 0 2px, transparent 2px 4px);
}

.fx {
    display: flex;
    justify-content: space-around;
    align-items: center;
    width: 110px;
    height: 26px;
    border: 1px solid #c6c6c6;
    color: #c0c0c0;
    stroke-width: 2;
}

.fx button {
    height: 14px;
}

.fx .fx-btn {
    font: italic bold 14px/12px "Liberation Serif", serif;
    color: #666;
}

.fx-btn sub {
    font-size: 11px;
    vertical-align: baseline;
}

.formula {
    flex: 1;
    display: flex;
    align-items: flex-start;
    height: 66px;
    margin-left: 3px;
    padding: 8px 4px;
    border: 1px solid #c6c6c6;
    background: #fdfdfd;
}

.formula textarea {
    flex: 1;
    height: 48px;
    resize: none;
}

.formula svg {
    stroke-width: 2;
    color: #666;
}

/* sheet */
.sheet {
    display: flex;
    position: relative;
    height: 402px;
}

.grid {
    width: 566px;
    table-layout: fixed;
    border-collapse: separate;
    border-spacing: 0;
    border-bottom: 1px solid #a6a6a6;
    font-size: 13px;
    line-height: 19px;
    color: #000;
}

.c-num { width: 26px; }
.c-a { width: 139px; }
.c-b { width: 96px; }
.c-c { width: 64px; }
.c-rest { width: 17px; }

.grid th,
.grid td {
    height: 20px;
    border-right: 1px solid #d4d4d4;
    border-bottom: 1px solid #d4d4d4;
    white-space: nowrap;
}

.grid td {
    padding: 0 2px;
}

.grid td:last-child {
    border-right-color: #a6a6a6;
}

.grid th {
    color: #444;
    font-size: 12px;
    font-weight: 400;
}

.grid thead th {
    border-bottom-color: #a6a6a6;
}

.grid thead th:last-child {
    border-right: none;
}

.grid tbody th {
    border-right-color: #a6a6a6;
}

.grid th.selected {
    background: #e1e1e1;
    color: #217346;
}

.grid thead th.selected {
    border-bottom: 2px solid #217346;
    border-right-color: #a6a6a6;
    line-height: 18px;
}

.grid .corner {
    background: linear-gradient(135deg, transparent 50%, #dadada 50%) 11px 5px / 11px 11px no-repeat;
    border-right-color: #a6a6a6;
}

.grid .num {
    text-align: right;
}

.active-cell {
    position: relative;
}

.active-cell::before {
    content: "";
    position: absolute;
    inset: -2px;
    border: 2px solid #217346;
}

.active-cell::after {
    content: "";
    position: absolute;
    right: -3px;
    bottom: -2px;
    width: 6px;
    height: 5px;
    background: #217346;
    border: solid #fff;
    border-width: 1px 0 0 1px;
}

.vscroll {
    display: flex;
    flex-direction: column;
    width: 15px;
    height: 400px;
    margin: 2px 0 0 3px;
    background: #f0f0f0;
}

.vscroll button,
.hscroll button {
    display: flex;
    align-items: center;
    justify-content: center;
    width: 15px;
    height: 15px;
    background: #fff;
    border: 1px solid #ababab;
}

.vthumb {
    height: 352px;
    margin-bottom: auto;
    background: #fff;
    border: 1px solid #ababab;
}

.ink-circle {
    left: 449px;
    top: 122px;
}

.ink-check {
    left: 200px;
    top: 321px;
}

/* sheet tabs and status bar */
.sheet-bar {
    display: flex;
    height: 28px;
    background: #f5f5f5;
}

.sheet-nav {
    display: flex;
    justify-content: space-between;
    align-items: center;
    width: 100px;
    padding: 0 40px 2px 26px;
    opacity: 0.4;
}

.sheet-tab {
    width: 58px;
    height: 24px;
    background: #fff;
    border: solid #a6a6a6;
    border-width: 0 1px;
    box-shadow: inset 0 -2px #217346;
    color: #217346;
    font-size: 12px;
    font-weight: 700;
}

.add-sheet {
    height: 16px;
    margin: 5px auto 0 33px;
    color: #777;
}

.splitter {
    width: 28px;
    background: #fff;
}

.splitter .grip {
    display: block;
    margin: 8px 13px;
}

.hscroll {
    display: flex;
    width: 197px;
    height: 15px;
    margin: 6px 21px 0 2px;
    background: #e8e8e8;
}

.hthumb {
    width: 146px;
    margin-right: auto;
    background: #fff;
    border: 1px solid #ababab;
}

.status {
    display: flex;
    align-items: center;
    height: 22px;
    padding-bottom: 2px;
    background: #217346;
    color: #fff;
    font-size: 11px;
}

.ready {
    flex: 1;
    padding-left: 8px;
}

.status > button {
    width: 40px;
    height: 20px;
    padding-top: 3px;
}

.status .on {
    background: #0f5c30;
}

.zoom {
    display: flex;
    align-items: center;
    gap: 4px;
    margin-left: 7px;
    font-size: 14px;
    line-height: 14px;
}

.zoom input {
    width: 100px;
    height: 12px;
    appearance: none;
    background: linear-gradient(#fff, #fff) center / 100% 1px no-repeat;
}

.zoom input::-webkit-slider-thumb {
    appearance: none;
    width: 5px;
    height: 11px;
    background: #fff;
}

.percent {
    width: 60px;
    padding-left: 13px;
}
```
